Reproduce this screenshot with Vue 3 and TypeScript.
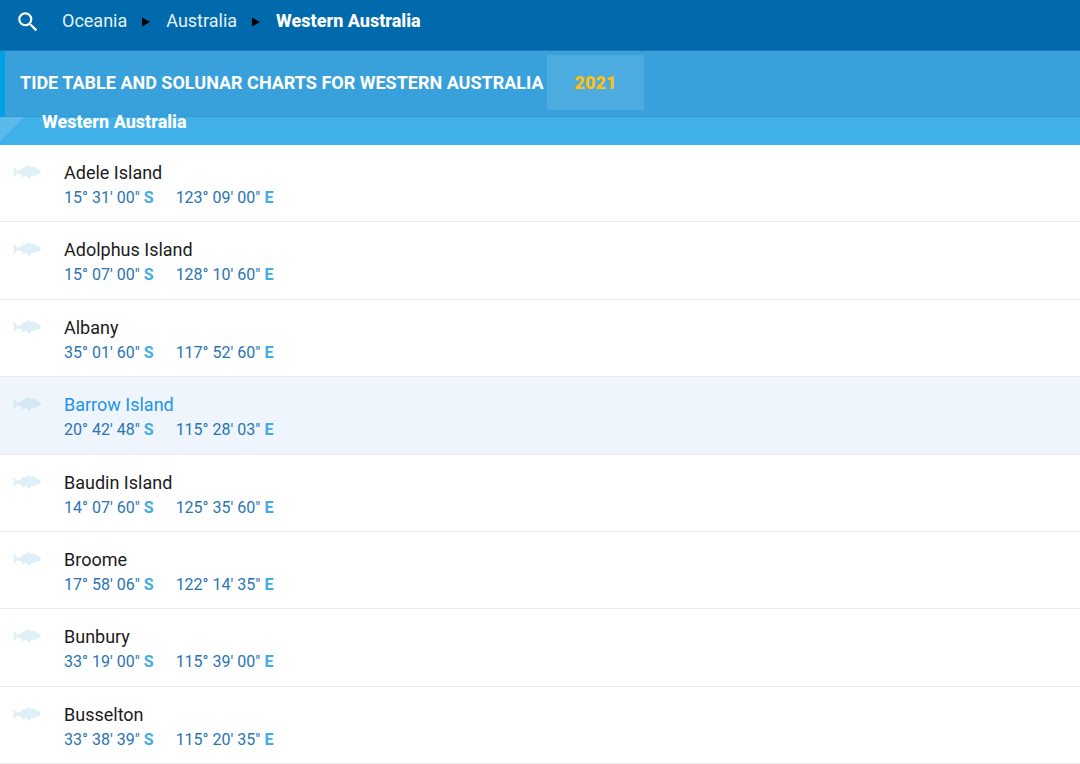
<script setup lang="ts">
interface Place {
  name: string
  lat: string
  lon: string
}

const places: Place[] = [
  { name: 'Adele Island', lat: '15° 31\' 00"', lon: '123° 09\' 00"' },
  { name: 'Adolphus Island', lat: '15° 07\' 00"', lon: '128° 10\' 60"' },
  { name: 'Albany', lat: '35° 01\' 60"', lon: '117° 52\' 60"' },
  { name: 'Barrow Island', lat: '20° 42\' 48"', lon: '115° 28\' 03"' },
  { name: 'Baudin Island', lat: '14° 07\' 60"', lon: '125° 35\' 60"' },
  { name: 'Broome', lat: '17° 58\' 06"', lon: '122° 14\' 35"' },
  { name: 'Bunbury', lat: '33° 19\' 00"', lon: '115° 39\' 00"' },
  { name: 'Busselton', lat: '33° 38\' 39"', lon: '115° 20\' 35"' },
]
const active = 'Barrow Island'
</script>

<template>
  <div class="page">
    <header class="topbar">
      <button class="search" type="button" aria-label="Search">
        <svg viewBox="0 0 24 24" width="26" height="26" aria-hidden="true">
          <path
            fill="#fff"
            d="M15.5 14h-.79l-.28-.27A6.471 6.471 0 0 0 16 9.5 6.5 6.5 0 1 0 9.5 16c1.61 0 3.09-.59 4.23-1.57l.27.28v.79l5 4.99L20.49 19l-4.99-5zm-6 0C7.01 14 5 11.99 5 9.5S7.01 5 9.5 5 14 7.01 14 9.5 11.99 14 9.5 14z"
          />
        </svg>
      </button>
      <nav class="crumbs" aria-label="Breadcrumb">
        <a href="#oceania">Oceania</a>
        <svg class="arrow" viewBox="0 0 8 10" width="8" height="10" aria-hidden="true"><path d="M0 0.5 8 5 0 9.5z" /></svg>
        <a href="#australia">Australia</a>
        <svg class="arrow" viewBox="0 0 8 10" width="8" height="10" aria-hidden="true"><path d="M0 0.5 8 5 0 9.5z" /></svg>
        <a class="current" href="#western-australia">Western Australia</a>
      </nav>
    </header>

    <div class="titlebar">
      <h1>TIDE TABLE AND SOLUNAR CHARTS FOR WESTERN AUSTRALIA</h1>
      <a class="year" href="#2021">2021</a>
    </div>

    <main class="content">
      <h2 class="region">Western Australia</h2>
      <ul class="places">
        <li v-for="p in places" :key="p.name">
          <a class="place" :class="{ active: p.name === active }" href="#place">
            <svg class="fish" viewBox="0 0 28 14" width="28" height="14" aria-hidden="true">
              <path
                d="M0 1.8Q2.8 3.2 4.3 5.7L9.4 4 8.6 1.5 10.9 3.2 11.5 1.5 13.2 2.6 15.3 -.4 16.8 1.4 18.7 1.6Q25 3 28.3 7 25.5 9.8 22 10.5L18 11.2 16.5 14.2 14 11.7 12 11 9.4 12.8 8.8 9.8 4.3 8.2Q2.6 10.8 .2 12L1.2 7Z"
              />
            </svg>
            <span class="text">
              <span class="name">{{ p.name }}</span>
              <span class="coords">
                <span class="lat">{{ p.lat }} <b>S</b></span>
                <span>{{ p.lon }} <b>E</b></span>
              </span>
            </span>
          </a>
        </li>
      </ul>
    </main>
  </div>
</template>

<style>
body {
  margin: 0;
  background: #fff;
}
</style>

<style scoped>
.page {
  display: flex;
  flex-direction: column;
  min-height: 100vh;
  font-family: Roboto, "Liberation Sans", sans-serif;
  font-size: 18px;
  line-height: 24px;
}
a {
  color: inherit;
  text-decoration: none;
}
.topbar {
  display: flex;
  align-items: flex-start;
  box-sizing: border-box;
  height: 51px;
  padding: 9px 15px;
  background: #006aad;
  border-bottom: 1px solid #1f78b0;
  color: #fff;
}
.search {
  display: flex;
  width: 26px;
  margin-right: 21px;
  padding: 0;
  border: 0;
  background: none;
}
.crumbs {
  display: flex;
  align-items: center;
}
.crumbs a {
  color: #e6f1f8;
}
.crumbs .current {
  color: #fff;
  font-weight: 800;
}
.arrow {
  margin: 2px 16px 0 15px;
  fill: #000;
}
.titlebar {
  display: flex;
  align-items: center;
  box-sizing: border-box;
  height: 66px;
  padding: 4px 0 7px 15px;
  border-left: 5px solid #00a0e6;
  background: #38a1dc;
  box-shadow: inset 0 -1px 0 #3698d0;
  color: #fff;
}
h1 {
  margin: 0 3px 0 0;
  font-size: 18px;
  font-weight: 700;
}
.year {
  padding: 16px 28px 15px;
  background: #4dacdf;
  color: #fdc010;
  font-weight: 900;
}
.content {
  display: flex;
  flex: 1;
  flex-direction: column;
}
.region {
  box-sizing: border-box;
  height: 28px;
  margin: 0;
  padding-left: 42px;
  background: linear-gradient(135deg, #58b9ea 17px, #3fb0e8 17px);
  color: #fff;
  font-size: 18px;
  font-weight: 800;
  line-height: 10px;
}
.places {
  display: grid;
  flex: 1;
  grid-auto-rows: 1fr;
  margin: 0;
  padding: 0;
  list-style: none;
}
.place {
  display: flex;
  box-sizing: border-box;
  height: 100%;
  padding: 16px 13px 0;
  border-bottom: 1px solid #ebebeb;
  color: #1c1c1c;
}
.fish {
  flex: none;
  margin: 4px 23px 0 0;
  overflow: visible;
  fill: #dfeff7;
}
.text,
.name {
  display: block;
}
.coords {
  display: flex;
  margin-top: 1px;
  color: #2b74b3;
  font-size: 16px;
}
.coords b {
  color: #40ade4;
}
.lat {
  margin-right: 22px;
}
.active {
  background: #eef5fc;
  color: #2492ea;
}
.active .fish {
  fill: #d3e8f2;
}
</style>
